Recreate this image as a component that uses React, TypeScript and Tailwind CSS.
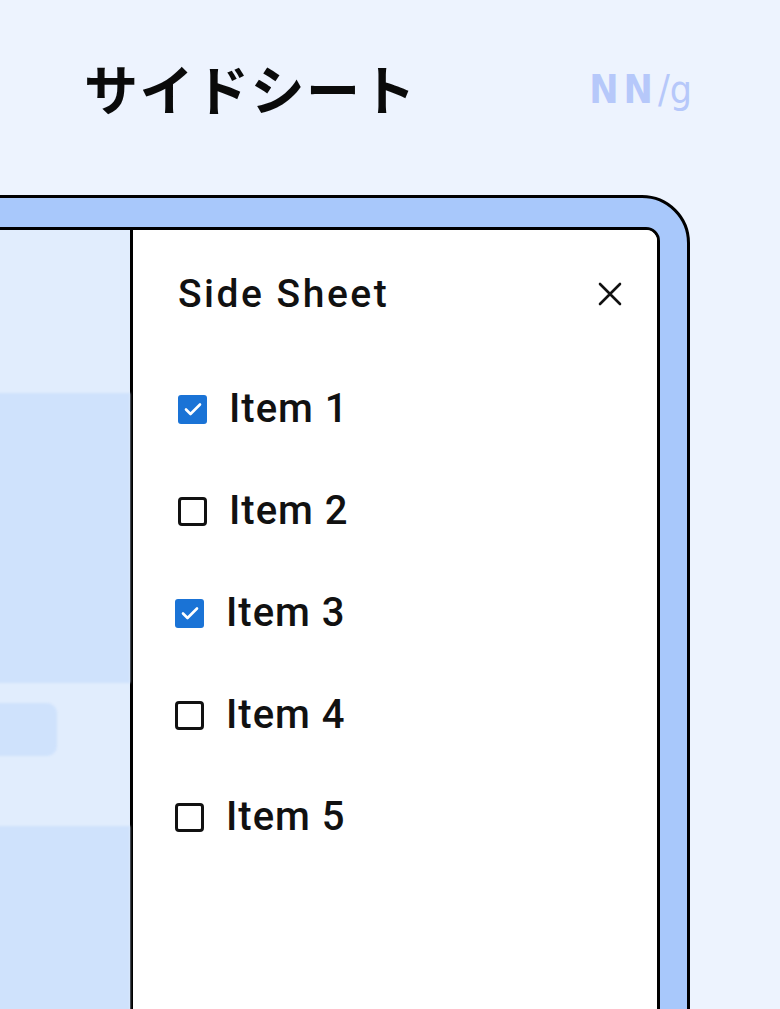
import React from "react";

type Item = { label: string; checked: boolean; shift: string };

const items: Item[] = [
  { label: "Item 1", checked: true, shift: "ml-0" },
  { label: "Item 2", checked: false, shift: "ml-0" },
  { label: "Item 3", checked: true, shift: "-ml-[3px]" },
  { label: "Item 4", checked: false, shift: "-ml-[3px]" },
  { label: "Item 5", checked: false, shift: "-ml-[3px]" },
];

function Checkbox({ checked }: { checked: boolean }) {
  if (checked) {
    return (
      <span className="flex h-[29px] w-[29px] shrink-0 items-center justify-center rounded-[3px] bg-[#1a73d6]">
        <svg width="22" height="22" viewBox="0 0 22 22" fill="none">
          <path d="M4 11.5l4.5 4.5L18 6.5" stroke="#fff" strokeWidth="2.6" strokeLinecap="round" strokeLinejoin="round" />
        </svg>
      </span>
    );
  }
  return <span className="block h-[29px] w-[29px] shrink-0 rounded-[4px] border-[3px] border-[#111]" />;
}

export default function App() {
  return (
    <div className="relative h-[1009px] w-[780px] overflow-hidden bg-[#edf3fe]">
      {/* header */}
      <div className="flex h-[186px] items-start justify-between pl-[84px] pr-[88px] pt-[50px]">
        <h1 className="text-[54px] font-bold leading-[76px] tracking-[1.5px] text-[#0a0a0a] [font-family:'Noto_Sans_CJK_JP',sans-serif]">
          サイドシート
        </h1>
        <div className="mt-[15px] flex items-baseline text-[39px] leading-[50px] text-[#b6c8fa] [font-family:'Liberation_Sans_Narrow','DejaVu_Sans_Condensed',sans-serif]">
          <span className="font-bold tracking-[5px]">NN</span>
          <span className="font-light">/g</span>
        </div>
      </div>

      {/* device frame */}
      <div className="ml-[-60px] mt-[9px] h-[900px] w-[750px] rounded-tr-[48px] border-[3px] border-black bg-[#a8c8fb] pr-[27px] pt-[29px]">
        <div className="flex h-[880px] overflow-hidden rounded-tr-[14px] border-[3px] border-black bg-white">
          {/* dimmed page behind the sheet */}
          <div className="flex w-[184px] shrink-0 flex-col bg-[#e1edfd]">
            <div className="h-[163px]" />
            <div className="h-[290px] bg-[#cfe2fc] blur-[1px]" />
            <div className="flex h-[143px] items-start pt-[20px]">
              <div className="ml-[10px] h-[53px] w-[101px] rounded-[10px] bg-[#cfe2fc] blur-[1px]" />
            </div>
            <div className="flex-1 bg-[#cfe2fc] blur-[1px]" />
          </div>

          {/* side sheet */}
          <div className="flex-1 border-l-[3px] border-black bg-white pl-[45px] pr-[35px] pt-[39px] [font-family:Roboto,sans-serif] text-[#111]">
            <div className="flex h-[50px] items-center justify-between">
              <span className="text-[39px] font-medium leading-none tracking-[2.5px]">Side Sheet</span>
              <svg width="24" height="24" viewBox="0 0 24 24" fill="none">
                <path d="M2 2l20 20M22 2L2 22" stroke="#111" strokeWidth="2.6" strokeLinecap="round" />
              </svg>
            </div>
            <ul className="mt-[39px]">
              {items.map((it) => (
                <li key={it.label} className={`flex h-[102px] items-center gap-[22px] ${it.shift}`}>
                  <Checkbox checked={it.checked} />
                  <span className="text-[40px] font-medium leading-none tracking-[1px]">{it.label}</span>
                </li>
              ))}
            </ul>
          </div>
        </div>
      </div>
    </div>
  );
}
